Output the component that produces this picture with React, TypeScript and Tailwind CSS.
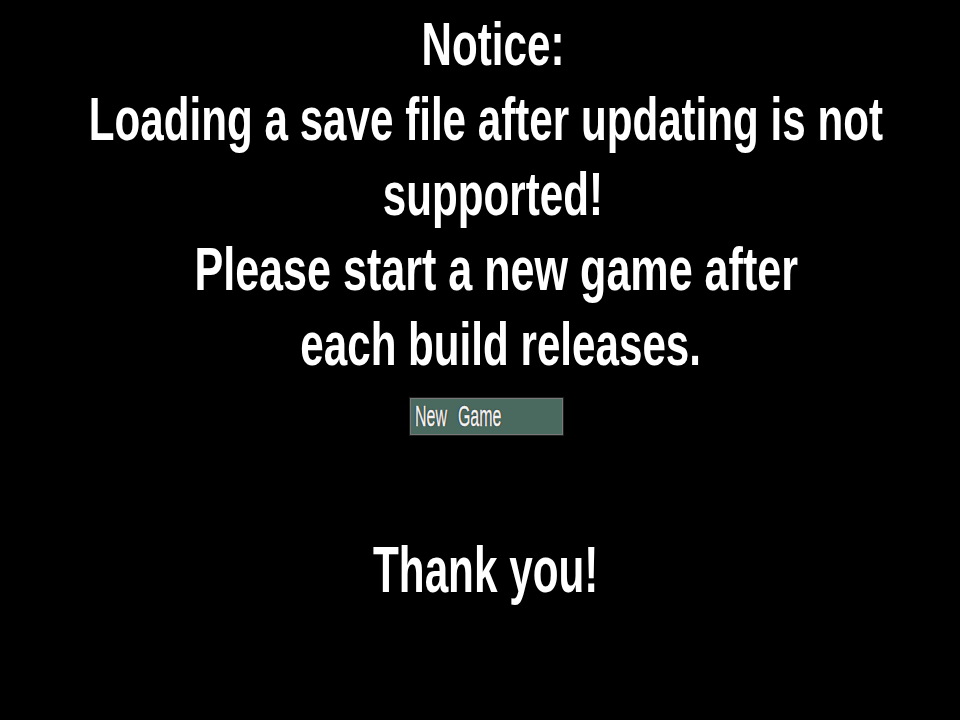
const lines = [
  { text: "Notice:", cls: "scale-x-[0.68] translate-x-[13px]" },
  { text: "Loading a save file after updating is not", cls: "scale-x-[0.68] translate-x-[6px]" },
  { text: "supported!", cls: "scale-x-[0.68] translate-x-[13px]" },
  { text: "Please start a new game after", cls: "scale-x-[0.695] translate-x-[16px]" },
  { text: "each build releases.", cls: "scale-x-[0.68] translate-x-[21px]" },
];

export default function App() {
  return (
    <div className="w-[960px] h-[720px] bg-black flex flex-col items-center pt-[6px] text-white overflow-hidden" style={{ fontFamily: '"Liberation Sans", Arial, sans-serif' }}>
      <div className="flex flex-col items-center font-bold text-[62px] leading-[75px]">
        {lines.map((l) => (
          <div key={l.text} className={`whitespace-nowrap ${l.cls}`}>{l.text}</div>
        ))}
      </div>
      <div className="mt-[16px] w-[155px] h-[39px] border border-[#1e1e1e] bg-[#787878] p-px translate-x-[6px]">
        <div className="w-full h-full bg-[#4a6a5f] flex items-center pl-[4px] overflow-hidden">
          <span className="inline-block whitespace-nowrap origin-left scale-x-[0.55] text-[29px] leading-none [word-spacing:12px] text-[#f4f4f4] [-webkit-text-stroke:0.6px_#f4f4f4] [text-shadow:0_0_2px_#000,0_0_1px_#000,0_0_1px_#000] pb-px">New Game</span>
        </div>
      </div>
      <div className="mt-[97px] font-bold text-[64px] leading-[75px] whitespace-nowrap scale-x-[0.66] translate-x-[6px]">Thank you!</div>
    </div>
  );
}
